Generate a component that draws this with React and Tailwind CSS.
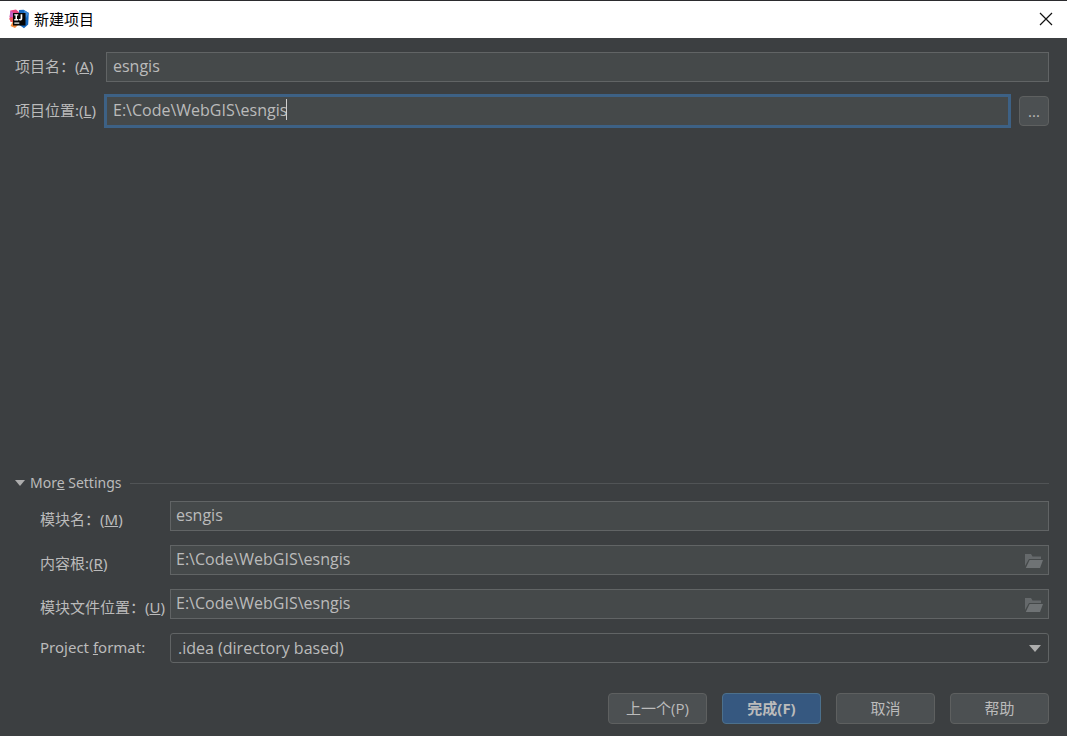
import { useState } from "react";

function AppLogo() {
  return (
    <svg width="20" height="20" viewBox="0 0 20 20" aria-hidden="true" className="shrink-0">
      <path d="M0.5 10.5 3.5 13 1.5 17 6 19 11 14 8 6z" fill="#f58a3c" />
      <path d="M1.5 1.5 7 0.5 12 5 7 15 0.5 10.5z" fill="#e8457f" />
      <path d="M1.5 1.5 5 4 5 8 0.5 8z" fill="#c65fc0" />
      <path d="M0.5 9 5 9 5 13 1.5 13z" fill="#ee5a5a" />
      <path d="M10 1 14.5 0.8 19.8 4 19.2 15.5 15 19.2 9 15z" fill="#1669c0" />
      <path d="M14.5 0.8 19.8 4 17 9z" fill="#3f8bd8" />
      <rect x="4" y="4" width="12.5" height="12.5" fill="#050505" />
      <path d="M5.3 5.2h3.9v1.3H8v3.6h1.2v1.3H5.3v-1.3h1.2V6.5H5.3z" fill="#fff" />
      <path d="M11.6 5.2h1.7v4.2c0 1.5-.9 2.1-2.1 2.1-.8 0-1.3-.3-1.7-.8l.9-1c.2.3.4.4.7.4.4 0 .5-.3.5-.8z" fill="#fff" />
      <rect x="5.3" y="13.5" width="5" height="1.2" fill="#fff" />
    </svg>
  );
}

function FolderIcon() {
  return (
    <svg width="18" height="14" viewBox="0 0 18 14" aria-hidden="true">
      <path d="M0 0h6l1.5 2.5H16V5H4L0 12z" fill="#65696b" />
      <path d="M4.6 6H18L15 14H0.8z" fill="#6f7375" />
    </svg>
  );
}

const field =
  "block h-[30px] w-full border border-[#616465] bg-[#45494a] pb-0.5 text-base text-[#bbbbbb] outline-none";

function PathField({ id, value, onChange }) {
  return (
    <div className="relative">
      <input id={id} className={`${field} pl-[5px] pr-8`} value={value} onChange={onChange} />
      <button type="button" aria-label="浏览" className="absolute right-1.5 top-[9px]">
        <FolderIcon />
      </button>
    </div>
  );
}

const dialogButton = "h-[31px] w-[99px] rounded-[4px] border pb-px";

export default function App() {
  const [name, setName] = useState("esngis");
  const [location, setLocation] = useState("E:\\Code\\WebGIS\\esngis");
  const [moduleName, setModuleName] = useState("esngis");
  const [root, setRoot] = useState("E:\\Code\\WebGIS\\esngis");
  const [moduleFile, setModuleFile] = useState("E:\\Code\\WebGIS\\esngis");

  return (
    <div className="flex min-h-screen flex-col bg-[#3c3f41] font-['Open_Sans','Noto_Sans_CJK_SC',sans-serif] text-[15px] leading-5 text-[#bbbbbb]">
      <header className="flex h-[38px] items-center border-t border-[#2b2b2e] bg-white pb-0.5 pl-[9px] pr-3 text-black">
        <AppLogo />
        <h1 className="ml-[5px] flex-1">新建项目</h1>
        <button type="button" aria-label="关闭" className="p-0.5">
          <svg width="14" height="14" viewBox="0 0 14 14" aria-hidden="true">
            <path d="M1 1 13 13M13 1 1 13" stroke="#111" strokeWidth="1.2" fill="none" />
          </svg>
        </button>
      </header>

      <form className="flex flex-1 flex-col pb-3 pl-[15px] pr-[18px] pt-[14px]" onSubmit={(e) => e.preventDefault()}>
        <div className="grid grid-cols-[91px_1fr] items-center gap-y-[14px]">
          <label htmlFor="name" className="whitespace-nowrap pb-0.5 font-['Noto_Sans','Noto_Sans_CJK_SC',sans-serif]">项目名：(<u>A</u>)</label>
          <input id="name" className={`${field} pl-1.5`} value={name} onChange={(e) => setName(e.target.value)} />

          <label htmlFor="location" className="whitespace-nowrap pb-0.5 font-['Noto_Sans','Noto_Sans_CJK_SC',sans-serif]">项目位置:(<u>L</u>)</label>
          <div className="flex gap-[10px]">
            <div className="relative flex-1">
              <input
                id="location"
                className="block h-[30px] w-full border border-[#3d6185] bg-[#45494a] pb-0.5 pl-1.5 text-base text-[#bbbbbb] caret-transparent outline-none ring-2 ring-[#3d6185]"
                value={location}
                onChange={(e) => setLocation(e.target.value)}
              />
              <span className="absolute left-[180px] top-[3px] h-[21px] w-px bg-[#d0d0d0]" />
            </div>
            <button type="button" className="h-[30px] w-[30px] rounded-[4px] border border-[#5e6060] bg-[#4c5052]">...</button>
          </div>
        </div>

        <section className="mt-auto font-['Noto_Sans','Noto_Sans_CJK_SC',sans-serif]">
          <div className="flex items-center">
            <button type="button" aria-expanded="true" className="flex items-center text-sm">
              <svg width="10" height="6" viewBox="0 0 10 6" aria-hidden="true" className="mr-[5px]">
                <path d="M0 0h10L5 6z" fill="#adadad" />
              </svg>
              <span>Mor<u>e</u> Settings</span>
            </button>
            <span className="ml-2 h-px flex-1 bg-[#515456]" />
          </div>

          <div className="mt-2 grid grid-cols-[130px_1fr] gap-y-[14px] pl-[25px]">
            <label htmlFor="module" className="whitespace-nowrap pt-2">模块名：(<u>M</u>)</label>
            <input id="module" className={`${field} pl-[5px] font-['Open_Sans',sans-serif]`} value={moduleName} onChange={(e) => setModuleName(e.target.value)} />

            <label htmlFor="root" className="whitespace-nowrap pt-2">内容根:(<u>R</u>)</label>
            <div className="font-['Open_Sans',sans-serif]">
              <PathField id="root" value={root} onChange={(e) => setRoot(e.target.value)} />
            </div>

            <label htmlFor="module-file" className="whitespace-nowrap pt-2">模块文件位置：(<u>U</u>)</label>
            <div className="font-['Open_Sans',sans-serif]">
              <PathField id="module-file" value={moduleFile} onChange={(e) => setModuleFile(e.target.value)} />
            </div>

            <label htmlFor="format" className="whitespace-nowrap pt-1">Project <u>f</u>ormat:</label>
            <div className="relative">
              <select id="format" className="block h-[30px] w-full appearance-none rounded-[3px] border border-[#616465] bg-[#3c3f41] pl-[7px] font-['Open_Sans',sans-serif] text-base outline-none">
                <option>.idea (directory based)</option>
                <option>.ipr (file based)</option>
              </select>
              <svg width="12" height="7" viewBox="0 0 12 7" aria-hidden="true" className="pointer-events-none absolute right-2 top-3">
                <path d="M0 0h12L6 7z" fill="#adadad" />
              </svg>
            </div>
          </div>
        </section>

        <footer className="mt-[30px] flex justify-end gap-[15px]">
          <button type="button" className={`${dialogButton} border-[#5e6060] bg-[#4c5052]`}>上一个(P)</button>
          <button type="submit" className={`${dialogButton} border-[#4c708c] bg-[#365880] font-bold`}>完成(F)</button>
          <button type="button" className={`${dialogButton} border-[#5e6060] bg-[#4c5052]`}>取消</button>
          <button type="button" className={`${dialogButton} border-[#5e6060] bg-[#4c5052]`}>帮助</button>
        </footer>
      </form>
    </div>
  );
}
